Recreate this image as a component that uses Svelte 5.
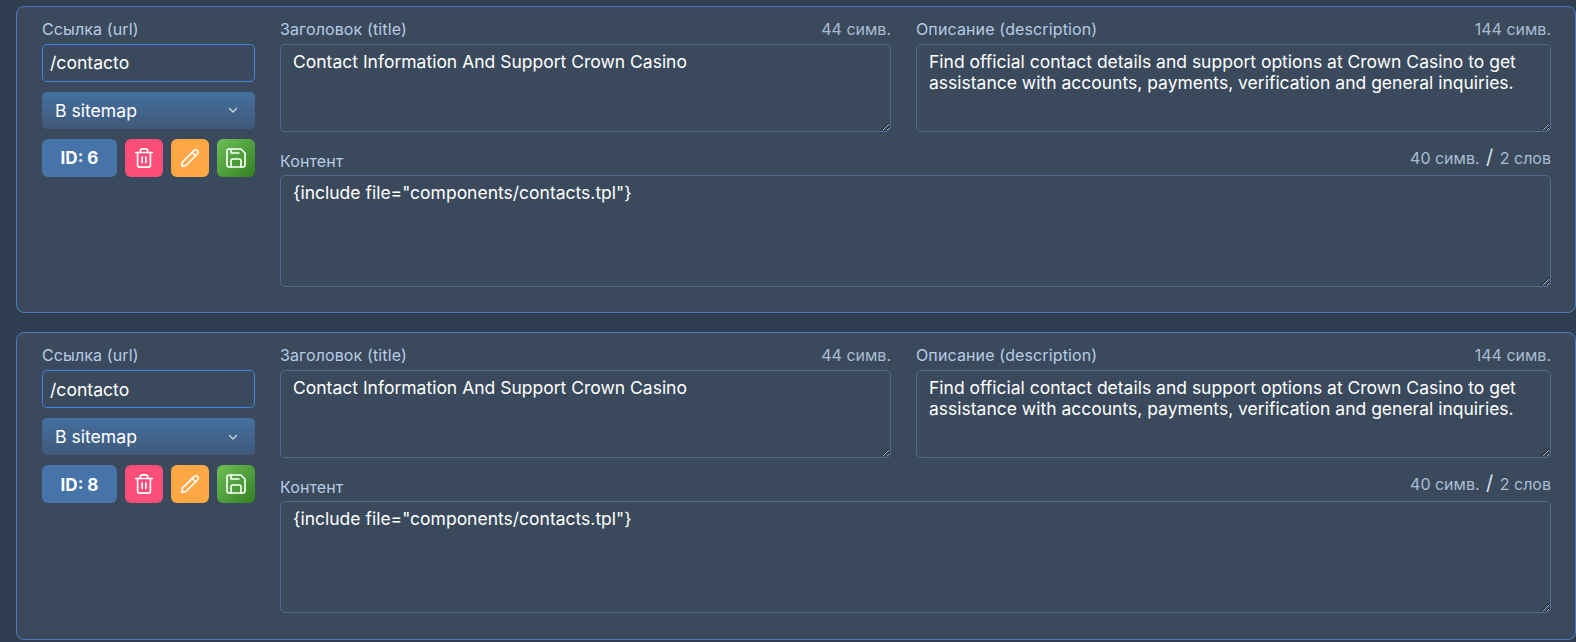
<script>
  // Page records rendered as editable cards
  const pages = [
    { id: 6, url: '/contacto' },
    { id: 8, url: '/contacto' },
  ];
  const title = 'Contact Information And Support Crown Casino';
  const description =
    'Find official contact details and support options at Crown Casino to get assistance with accounts, payments, verification and general inquiries.';
  const content = '{include file="components/contacts.tpl"}';
</script>

<div class="list">
  {#each pages as page (page.id)}
    <section class="card">
      <div class="side">
        <span class="label">Ссылка (url)</span>
        <input class="url" type="text" value={page.url} />
        <div class="select">
          <span>В sitemap</span>
          <svg width="12" height="12" viewBox="0 0 12 12" fill="none" stroke="#c3d0de" stroke-width="1.5" stroke-linecap="round" stroke-linejoin="round">
            <path d="M2.5 4.5 6 8l3.5-3.5" />
          </svg>
        </div>
        <div class="actions">
          <button class="id">ID: {page.id}</button>
          <button class="icon trash" aria-label="Удалить">
            <svg width="22" height="22" viewBox="0 0 24 24" fill="none" stroke="#fff" stroke-width="1.8" stroke-linecap="round" stroke-linejoin="round">
              <path d="M3 6h18" />
              <path d="M8 6V4a2 2 0 0 1 2-2h4a2 2 0 0 1 2 2v2" />
              <path d="M5 6v14a2 2 0 0 0 2 2h10a2 2 0 0 0 2-2V6" />
              <path d="M10 11v6" />
              <path d="M14 11v6" />
            </svg>
          </button>
          <button class="icon edit" aria-label="Редактировать">
            <svg width="22" height="22" viewBox="0 0 24 24" fill="none" stroke="#fff" stroke-width="1.8" stroke-linecap="round" stroke-linejoin="round">
              <path d="M17 3.5a2.6 2.6 0 0 1 3.6 3.6L7.5 20.2 3 21l.8-4.5z" />
              <path d="m14.5 6 3.5 3.5" />
            </svg>
          </button>
          <button class="icon save" aria-label="Сохранить">
            <svg width="24" height="24" viewBox="0 0 24 24" fill="none" stroke="#fff" stroke-width="1.6" stroke-linecap="round" stroke-linejoin="round">
              <path d="M5 3h12l4 4v12a2 2 0 0 1-2 2H5a2 2 0 0 1-2-2V5a2 2 0 0 1 2-2z" />
              <path d="M7 21v-6a2 2 0 0 1 2-2h6a2 2 0 0 1 2 2v6" />
              <path d="M7 3v4h8" />
            </svg>
          </button>
        </div>
      </div>

      <div class="fields">
        <div class="field">
          <div class="head"><span class="label">Заголовок (title)</span><span class="count">44 симв.</span></div>
          <textarea class="short" value={title}></textarea>
        </div>
        <div class="field">
          <div class="head"><span class="label">Описание (description)</span><span class="count">144 симв.</span></div>
          <textarea class="short" value={description}></textarea>
        </div>
        <div class="field wide">
          <div class="head"><span class="label">Контент</span><span class="count">40 симв. <b>/</b> 2 слов</span></div>
          <textarea class="tall" value={content}></textarea>
        </div>
      </div>
    </section>
  {/each}
</div>

<style>
  :global(body) {
    background: #2f3e50;
    font-family: Inter, "Noto Sans", sans-serif;
    overflow: hidden;
  }

  .list {
    display: flex;
    flex-direction: column;
    gap: 19.2px;
    padding: 5.6px 0 0 16px;
  }

  .card {
    box-sizing: border-box;
    width: 1560px;
    height: 307.4px;
    flex: none;
    display: flex;
    gap: 25px;
    padding: 14.3px 24px 0 25px;
    background: #3a4a5c;
    border: 1px solid #4a7dbd;
    border-radius: 8px;
  }

  .side {
    width: 213px;
    flex: none;
    display: flex;
    flex-direction: column;
  }

  .label {
    font-size: 16px;
    line-height: 17px;
    letter-spacing: 0.12px;
    color: #b8cbe4;
  }

  .url {
    box-sizing: border-box;
    width: 100%;
    height: 38px;
    margin-top: 6px;
    padding: 0 7px;
    font: 17.6px Inter, sans-serif;
    color: #fff;
    background: #3a4a5c;
    border: 1px solid #3f86e0;
    border-radius: 5px;
    outline: none;
  }

  .select {
    height: 37px;
    margin-top: 10px;
    padding: 0 16px 0 13px;
    display: flex;
    align-items: center;
    justify-content: space-between;
    font-size: 17.6px;
    color: #fff;
    background: linear-gradient(#44709f, #40597a);
    border-radius: 5px;
  }

  .actions {
    display: flex;
    gap: 8px;
    margin-top: 10px;
  }

  button {
    height: 38px;
    padding: 0;
    display: flex;
    align-items: center;
    justify-content: center;
    border: none;
    border-radius: 6px;
    font-family: inherit;
    color: #fff;
  }

  .id {
    width: 75px;
    padding-top: 1px;
    font-size: 17px;
    font-weight: 700;
    background: #4674a8;
  }

  .icon {
    width: 38px;
  }

  .trash {
    background: #fb4f78;
  }

  .edit {
    background: #ffa845;
  }

  .save {
    background: linear-gradient(135deg, #6cc055, #338023);
  }

  .fields {
    flex: 1;
    display: grid;
    grid-template-columns: 611px 635px;
    gap: 19.9px 25px;
    align-content: start;
  }

  .field {
    display: flex;
    flex-direction: column;
  }

  .wide {
    grid-column: 1 / -1;
  }

  .head {
    display: flex;
    justify-content: space-between;
    align-items: flex-start;
    height: 23px;
  }

  .wide .label {
    margin-top: 1px;
  }

  .wide .count {
    margin-top: -3px;
  }

  .count {
    font-size: 16px;
    line-height: 17px;
    color: #a9bcd4;
  }

  .count b {
    font-size: 20px;
    font-weight: 400;
    color: #d5e0ee;
    margin: 0 2px;
  }

  textarea {
    box-sizing: border-box;
    display: block;
    width: 100%;
    padding: 5.9px 12px;
    font: 17.5px/21px Inter, sans-serif;
    color: #fff;
    background: #3a4a5c;
    border: 1px solid #51698a;
    border-radius: 5px;
    outline: none;
  }

  .short {
    height: 88px;
  }

  .tall {
    height: 112px;
  }
</style>
